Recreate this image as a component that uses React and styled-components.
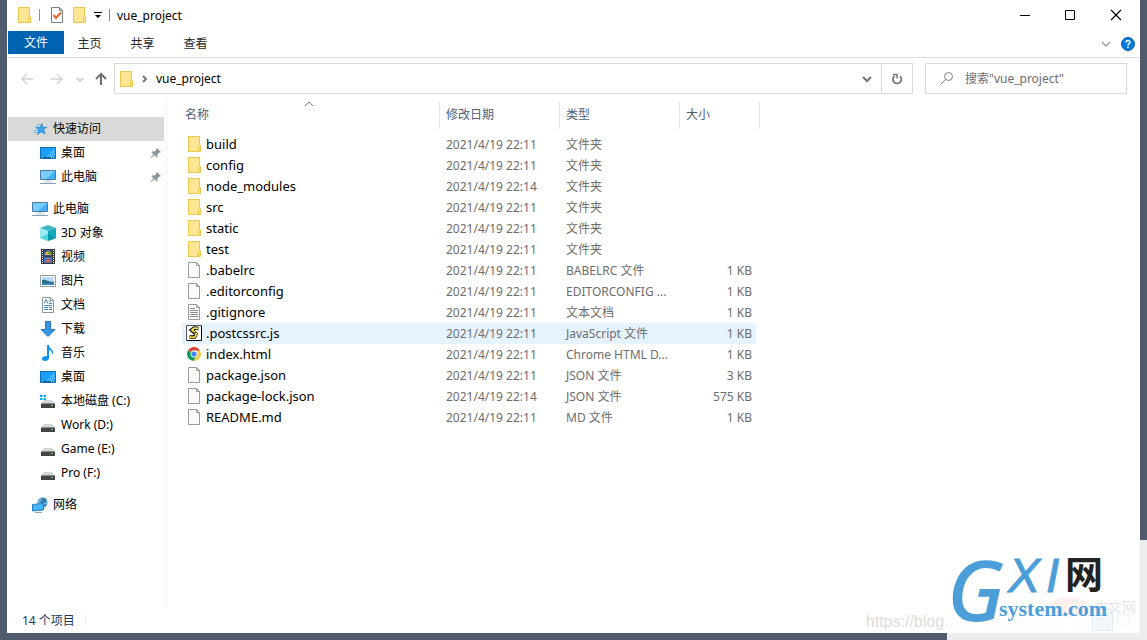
import styled, { createGlobalStyle } from 'styled-components';

const GlobalStyle = createGlobalStyle`
  * {
    box-sizing: border-box;
  }

  body {
    margin: 0;
    background-color: #505c6b;
    font-family: 'Noto Sans', 'Noto Sans CJK SC', sans-serif;
    font-size: 12px;
    line-height: 20px;
    color: #000;
  }

  button,
  input {
    font: inherit;
    color: inherit;
  }

  svg {
    flex: none;
  }
`;

// Window frame
const Desktop = styled.div`
  position: relative;
  display: flex;
  min-height: 100vh;
  padding: 0 7px 7px;
`;

const Window = styled.div`
  flex: 1;
  min-width: 0;
  display: flex;
  flex-direction: column;
  padding-left: 1px;
  background-color: #fff;
`;

const TitleBar = styled.header`
  display: flex;
  align-items: center;
  height: 31px;
  padding: 0 1px 1px 8px;
`;

const IconButton = styled.button`
  display: flex;
  align-items: center;
  justify-content: center;
  width: ${(props) => props.$width || 16}px;
  height: ${(props) => props.$height || 20}px;
  padding: 0;
  border: none;
  background: none;
`;

const Separator = styled.span`
  width: 1px;
  height: 12px;
  margin: 0 ${(props) => props.$gap}px;
  background-color: #8c8c8c;
`;

const Title = styled.h1`
  flex: 1;
  margin: 0;
  padding: 2px 0 0 3px;
  font-size: 12px;
  font-weight: 400;
`;

// Ribbon tabs
const Ribbon = styled.nav`
  display: flex;
  align-items: center;
  height: 27px;
  padding-right: 1px;
  border-bottom: 1px solid #dadbdc;
`;

const Tab = styled.button`
  width: ${(props) => (props.$active ? 56 : 53)}px;
  height: 23px;
  margin-bottom: 3px;
  padding: ${(props) => (props.$active ? 0 : '2px 2px 0 0')};
  border: none;
  background-color: ${(props) => (props.$active ? '#0063b1' : 'transparent')};
  color: ${(props) => (props.$active ? '#fff' : '#262626')};
`;

const Spacer = styled.span`
  flex: 1;
`;

// Address bar
const AddressRow = styled.div`
  display: flex;
  align-items: center;
  gap: 12px;
  padding: 5px 13px 5px 9px;
`;

const NavButtons = styled.div`
  display: flex;
  align-items: center;
  gap: 10px;
  margin-right: -7px;
`;

const AddressBox = styled.div`
  flex: 1;
  display: flex;
  align-items: center;
  height: 31px;
  padding-left: 3px;
  border: 1px solid #d9d9d9;
`;

const Crumb = styled.a`
  color: #000;
  text-decoration: none;
`;

const RefreshCell = styled.div`
  display: flex;
  height: 29px;
  border-left: 1px solid #d9d9d9;
`;

const SearchBox = styled.label`
  display: flex;
  align-items: center;
  gap: 10px;
  width: 202px;
  height: 31px;
  padding-left: 13px;
  border: 1px solid #d9d9d9;
`;

const SearchInput = styled.input`
  width: 100%;
  padding: 0;
  border: none;
  outline: none;
  background: none;

  &::placeholder {
    color: #6d6d6d;
    opacity: 1;
  }
`;

// Sidebar
const Main = styled.div`
  flex: 1;
  display: flex;
`;

const Sidebar = styled.nav`
  flex: none;
  width: 159px;
  margin-top: 2px;
  padding-top: 16px;
  border-right: 1px solid #f3f3f3;
`;

const SideGroup = styled.div`
  margin-bottom: 8px;
`;

const SideItem = styled.a`
  display: flex;
  align-items: center;
  gap: 5px;
  height: 24px;
  margin-right: 2px;
  padding-right: 2px;
  padding-left: ${(props) => (props.$level ? 32 : 24)}px;
  background-color: ${(props) => (props.$active ? '#d9d9d9' : 'transparent')};
  color: #000;
  text-decoration: none;
`;

const SideLabel = styled.span`
  flex: 1;
`;

// File list
const Content = styled.main`
  flex: 1;
  min-width: 0;
  padding: 3px 0 0 15px;
`;

const FileTable = styled.table`
  width: 578px;
  table-layout: fixed;
  border-collapse: collapse;
`;

const HeadRow = styled.tr`
  height: 32px;
`;

const HeadCell = styled.th`
  position: relative;
  width: ${(props) => props.$width}px;
  padding: 0 6px;
  font-weight: 400;
  text-align: left;
  vertical-align: top;
  line-height: 26px;
  color: #4c607a;
  background: linear-gradient(#e5e5e5, #e5e5e5) right top / 1px 27px no-repeat;

  &:first-child {
    padding-left: 3px;
  }
`;

const SortMark = styled.span`
  position: absolute;
  top: -6px;
  left: 0;
  right: 4px;
  display: flex;
  justify-content: center;
`;

const FileRow = styled.tr`
  height: 21px;
  background: ${(props) =>
    props.$active
      ? 'linear-gradient(#e5f3ff, #e5f3ff) left top / calc(100% - 4px) 100% no-repeat'
      : 'none'};
`;

const Cell = styled.td`
  overflow: hidden;
  padding: 0 6px;
  line-height: 21px;
  white-space: nowrap;
  text-overflow: ellipsis;
  text-align: ${(props) => (props.$right ? 'right' : 'left')};
  color: #6d6d6d;

  &:first-child {
    padding-left: 4px;
  }

  &:last-child {
    padding-right: 8px;
  }
`;

const FileName = styled.span`
  display: flex;
  gap: 4px;
  font-size: 13px;
  color: #000;

  svg {
    margin-top: 2px;
  }
`;

// Status bar
const StatusBar = styled.footer`
  display: flex;
  align-items: center;
  height: 26px;
  padding: 2px 0 0 14px;
  color: #1e395b;
`;

const StatusText = styled.span`
  padding-right: 10px;
  border-right: 1px solid #f0f0f0;
  line-height: 12px;
`;

// Watermark over the bottom right corner
const BlogMark = styled.span`
  position: absolute;
  right: 9px;
  bottom: 6px;
  font-family: 'Liberation Sans', sans-serif;
  font-size: 16px;
  line-height: 24px;
  color: #dcdcdc;
`;

const Brand = styled.div`
  position: absolute;
  right: 0;
  bottom: 0;
  display: flex;
  background-color: rgba(255, 255, 255, 0.89);
`;

function Icon({ children }) {
  return (
    <svg width="16" height="16" viewBox="0 0 16 16" fill="none" aria-hidden="true">
      {children}
    </svg>
  );
}

function FolderIcon() {
  return (
    <Icon>
      <rect x="2.5" y="0.5" width="11" height="15" fill="#ffe694" stroke="#ebc750" />
      <path d="M12.5 15.5v-5l1-1h1v6z" fill="#ffe694" stroke="#ebc750" />
    </Icon>
  );
}

function PageIcon({ lines }) {
  return (
    <Icon>
      <path d="M2.5.5h8l3 3v12h-11z" fill="#fafafa" stroke="#9a9a9a" />
      <path d="M10.5.5v3h3" stroke="#9a9a9a" />
      {lines && <path d="M4 4.5h5M4 6.5h8M4 8.5h8M4 10.5h8M4 12.5h8" stroke="#8f8f8f" />}
    </Icon>
  );
}

function ScriptIcon() {
  return (
    <Icon>
      <path d="M.5.5h15v15H.5z" fill="#fff" stroke="#555" />
      <path d="M15.5 1v14.5H1" stroke="#000" />
      <path d="M12.5 3.5 8 3 5.5 5l4.5 4-1.5 3h-5" stroke="#111" strokeWidth="3.6" />
      <path d="M12 3.5 8 3.2 6 5l4.5 4-2 3H4" stroke="#f0e040" strokeWidth="1.8" />
      <path d="m8 5 3-.5M7 8l3-.5m-5 4 4-1" stroke="#111" strokeWidth=".7" />
    </Icon>
  );
}

function ChromeIcon() {
  return (
    <Icon>
      <path d="M8 8 2 4.5A7 7 0 0 1 14.1 4.7H8z" fill="#db4437" />
      <path d="M2 4.5A7 7 0 0 0 7.5 15L11 9.5 8 8z" fill="#0f9d58" />
      <path d="M14.1 4.7A7 7 0 0 1 7.5 15L11 9.5V4.7z" fill="#ffcd40" />
      <circle cx="8" cy="8" r="3.4" fill="#fff" />
      <circle cx="8" cy="8" r="2.6" fill="#4285f4" />
    </Icon>
  );
}

function StarIcon() {
  return (
    <Icon>
      <path
        d="m9.8 2.500 1 3.600 4 .2-3.300 2.200 1.500 4.500-3.700-2.300-4 2.800 1.500-4.500-2.600-2.500 3.900-.2z"
        fill="#35a4ec"
        stroke="#1683d0"
        strokeWidth=".7"
      />
      <path d="M5 3.5h3M3 5.5h2M2 9.5h3M1.5 11.5h3" stroke="#5cb9f3" />
    </Icon>
  );
}

function DesktopIcon() {
  return (
    <Icon>
      <path d="M.5 2.5h15v11H.5z" fill="#1a9fff" stroke="#0873b8" />
      <path d="M15 3v7l-4 2.5H5z" fill="#42b3ff" />
      <path d="M1 12.5h14" stroke="#075e9c" />
      <path d="M2 12.5h1M11 12.5h1m1 0h1" stroke="#fff" />
    </Icon>
  );
}

function ComputerIcon() {
  return (
    <Icon>
      <path d="M.5 1.5h15v9H.5z" fill="#7accff" stroke="#497c9f" />
      <path d="M15 2v8H6z" fill="#45b2f8" />
      <path d="M6 11.5h4M4 13h8" stroke="#c3d0da" />
      <path d="M0 14.5h16" stroke="#8a9fb2" />
    </Icon>
  );
}

function CubeIcon() {
  return (
    <Icon>
      <path d="m8 0 8 3-8 3-8-3z" fill="#3fb8c6" />
      <path d="m0 3 8 3v10l-8-3z" fill="#9aebf1" />
      <path d="m16 3-8 3v10l8-3z" fill="#12a9bd" />
      <path d="m0 13 8-4v7z" fill="#4fd3e0" />
      <path d="m16 13-8-4v7z" fill="#0896ac" />
    </Icon>
  );
}

function VideoIcon() {
  return (
    <Icon>
      <path d="M1 0h14v15H1z" fill="#3a3a3a" />
      <path d="M4 1h8v6H4z" fill="#36568c" />
      <path d="M4 8h8v6H4z" fill="#4779cd" />
      <path d="M5 4c2-2 4-2 6-1v3H5z" fill="#e6b22d" />
      <path d="M8 3h3v2H8z" fill="#5ca33c" />
      <path d="m5 13 3-4 3 4z" fill="#df6038" />
      <path d="M2.5 1v14M13.5 1v14" stroke="#eee" strokeDasharray="1 1" />
    </Icon>
  );
}

function PictureIcon() {
  return (
    <Icon>
      <path d="M.5 2.5h15v11H.5z" fill="#fff" stroke="#989da1" />
      <path d="M2 4h12v8H2z" fill="#b7dcfa" />
      <path d="M2 7c4-1 6 2 12 2v3H2z" fill="#2d7187" />
      <path d="M2 10.5h12V12H2z" fill="#3a8ed0" />
    </Icon>
  );
}

function DocumentIcon() {
  return (
    <Icon>
      <path d="M2.5.5h8l3 3v12h-11z" fill="#fff" stroke="#8d969d" />
      <path d="M10.5.5v3h3" stroke="#8d969d" />
      <path d="m4 6.5 2-4 2 4m1-2h2m-2 2h3m-8 2h8m-8 2h4m1 0h3m-8 2h4" stroke="#378ac5" />
      <path d="M9 12.5h3" stroke="#4a6a50" />
    </Icon>
  );
}

function DownloadIcon() {
  return (
    <Icon>
      <path d="M5.5.5h5v8H15l-7 7-7-7h4.5z" fill="#3796e5" stroke="#2374c0" />
    </Icon>
  );
}

function MusicIcon() {
  return (
    <Icon>
      <path d="M7 0h2c0 4 5 4 4 9h-1c0-3-1-3-3-4v8c0 2-2 3-4 3s-3-1-3-2.5S4 11 7 11z" fill="#0c96ed" />
    </Icon>
  );
}

function DriveIcon({ system }) {
  return (
    <Icon>
      {system && <path d="M0 2h2.5v2H0zm3.5 0H6v2H3.5zM0 5h2.5v2H0zm3.5 0H6v2H3.5z" fill="#00adef" />}
      <path d="M4 7h8l3 4H1z" fill="#d4d6d8" />
      <path d="M1 10.5h14V15H1z" fill="#444" />
      <path d="M11 12.5h2" stroke="#67e06b" />
    </Icon>
  );
}

function NetworkIcon() {
  return (
    <Icon>
      <circle cx="10.5" cy="5.5" r="5.2" fill="#6bb2df" />
      <path d="M8 1c2 0 3 2 1 3s0 3 3 2 3-4 1-5M11 8l4-1-2 3z" fill="#3c7baa" />
      <path d="m.5 7.5 11-1V13l-11 1z" fill="#45b4fa" stroke="#2383c4" />
      <path d="M3 15.5h7" stroke="#98a9b8" />
    </Icon>
  );
}

function PinIcon() {
  return (
    <svg width="12" height="12" viewBox="0 0 12 12" aria-hidden="true">
      <path
        d="m7 1 4 4-1 .8-.8-.2-1.7 1.9.1 2-1 1-2.2-2.3L1 11.2l-.5-.4 3-3.3-2-2.2 1-1 2 .1 1.8-1.7-.2-.8z"
        fill="#8d979e"
      />
    </svg>
  );
}

function Chevron({ dir = 'down', color = '#767676', width = 2 }) {
  const paths = { down: 'm4 6 4 4 4-4', right: 'm6 5 3 3-3 3', up: 'm4 10 4-4 4 4', small: 'm5 7 3 3 3-3' };
  return (
    <Icon>
      <path d={paths[dir]} stroke={color} strokeWidth={width} />
    </Icon>
  );
}

function Arrow({ dir, color }) {
  const paths = {
    left: 'M14 8H3m5-5L3 8l5 5',
    right: 'M2 8h11M8 3l5 5-5 5',
    up: 'M8 14V3M3 8l5-5 5 5',
  };
  return (
    <Icon>
      <path d={paths[dir]} stroke={color} strokeWidth={dir === 'up' ? 2 : 1.5} />
    </Icon>
  );
}

const sideGroups = [
  [
    { label: '快速访问', icon: <StarIcon />, active: true },
    { label: '桌面', icon: <DesktopIcon />, level: 1, pinned: true },
    { label: '此电脑', icon: <ComputerIcon />, level: 1, pinned: true },
  ],
  [
    { label: '此电脑', icon: <ComputerIcon /> },
    { label: '3D 对象', icon: <CubeIcon />, level: 1 },
    { label: '视频', icon: <VideoIcon />, level: 1 },
    { label: '图片', icon: <PictureIcon />, level: 1 },
    { label: '文档', icon: <DocumentIcon />, level: 1 },
    { label: '下载', icon: <DownloadIcon />, level: 1 },
    { label: '音乐', icon: <MusicIcon />, level: 1 },
    { label: '桌面', icon: <DesktopIcon />, level: 1 },
    { label: '本地磁盘 (C:)', icon: <DriveIcon system />, level: 1 },
    { label: 'Work (D:)', icon: <DriveIcon />, level: 1 },
    { label: 'Game (E:)', icon: <DriveIcon />, level: 1 },
    { label: 'Pro (F:)', icon: <DriveIcon />, level: 1 },
  ],
  [{ label: '网络', icon: <NetworkIcon /> }],
];

const files = [
  { name: 'build', date: '2021/4/19 22:11', type: '文件夹', icon: <FolderIcon /> },
  { name: 'config', date: '2021/4/19 22:11', type: '文件夹', icon: <FolderIcon /> },
  { name: 'node_modules', date: '2021/4/19 22:14', type: '文件夹', icon: <FolderIcon /> },
  { name: 'src', date: '2021/4/19 22:11', type: '文件夹', icon: <FolderIcon /> },
  { name: 'static', date: '2021/4/19 22:11', type: '文件夹', icon: <FolderIcon /> },
  { name: 'test', date: '2021/4/19 22:11', type: '文件夹', icon: <FolderIcon /> },
  { name: '.babelrc', date: '2021/4/19 22:11', type: 'BABELRC 文件', size: '1 KB', icon: <PageIcon /> },
  { name: '.editorconfig', date: '2021/4/19 22:11', type: 'EDITORCONFIG ...', size: '1 KB', icon: <PageIcon /> },
  { name: '.gitignore', date: '2021/4/19 22:11', type: '文本文档', size: '1 KB', icon: <PageIcon lines /> },
  { name: '.postcssrc.js', date: '2021/4/19 22:11', type: 'JavaScript 文件', size: '1 KB', icon: <ScriptIcon />, active: true },
  { name: 'index.html', date: '2021/4/19 22:11', type: 'Chrome HTML D...', size: '1 KB', icon: <ChromeIcon /> },
  { name: 'package.json', date: '2021/4/19 22:11', type: 'JSON 文件', size: '3 KB', icon: <PageIcon /> },
  { name: 'package-lock.json', date: '2021/4/19 22:14', type: 'JSON 文件', size: '575 KB', icon: <PageIcon /> },
  { name: 'README.md', date: '2021/4/19 22:11', type: 'MD 文件', size: '1 KB', icon: <PageIcon /> },
];

function WindowHeader() {
  return (
    <TitleBar>
      <FolderIcon />
      <Separator $gap={7} />
      <IconButton $width={20} aria-label="属性">
        <svg width="14" height="16" viewBox="0 0 14 16" fill="none" aria-hidden="true">
          <path d="M1.5.5h8l3 3v12h-11z" fill="#fff" stroke="#7f7f7f" />
          <path d="M9.5.5v3h3" stroke="#7f7f7f" />
          <path d="m3.5 8 2.5 3 5-5.5" stroke="#e8622c" strokeWidth="2" />
        </svg>
      </IconButton>
      <IconButton $width={24} aria-label="新建文件夹">
        <FolderIcon />
      </IconButton>
      <IconButton $width={14} aria-label="自定义快速访问工具栏">
        <svg width="8" height="7" viewBox="0 0 8 7" aria-hidden="true">
          <path d="M0 0h8v1H0zM1 3h6L4 6z" fill="#000" />
        </svg>
      </IconButton>
      <Separator $gap={4} />
      <Title>vue_project</Title>
      <IconButton $width={46} aria-label="最小化">
        <Icon>
          <path d="M4 8.5h10" stroke="#000" />
        </Icon>
      </IconButton>
      <IconButton $width={46} aria-label="最大化">
        <Icon>
          <path d="M3.5 3.5h9v9h-9z" stroke="#000" />
        </Icon>
      </IconButton>
      <IconButton $width={46} aria-label="关闭">
        <Icon>
          <path d="m3 3 10 10M13 3 3 13" stroke="#000" strokeWidth="1.2" />
        </Icon>
      </IconButton>
    </TitleBar>
  );
}

function AddressBar() {
  return (
    <AddressRow>
      <NavButtons>
        <IconButton $width={20} aria-label="后退">
          <Arrow dir="left" color="#d3d3d3" />
        </IconButton>
        <IconButton $width={20} aria-label="前进">
          <Arrow dir="right" color="#d3d3d3" />
        </IconButton>
        <IconButton $width={6} aria-label="最近位置">
          <Chevron dir="small" color="#d3d3d3" />
        </IconButton>
        <IconButton aria-label="上移">
          <Arrow dir="up" color="#6f6f6f" />
        </IconButton>
      </NavButtons>
      <AddressBox>
        <FolderIcon />
        <IconButton $width={22} aria-label="展开路径">
          <Chevron dir="right" />
        </IconButton>
        <Crumb href="#vue_project">vue_project</Crumb>
        <Spacer />
        <IconButton $width={28} aria-label="以前的位置">
          <Chevron />
        </IconButton>
        <RefreshCell>
          <IconButton $width={30} $height={29} aria-label="刷新">
            <Icon>
              <path d="M11 5.2a4.2 4.2 0 1 1-5.500-.2" stroke="#767676" strokeWidth="1.8" />
              <path d="M4 3.500h4v4" stroke="#767676" strokeWidth="1.5" />
            </Icon>
          </IconButton>
        </RefreshCell>
      </AddressBox>
      <SearchBox>
        <Icon>
          <circle cx="9.5" cy="5.5" r="4" stroke="#858585" />
          <path d="m6.5 8.5-5 5" stroke="#858585" />
        </Icon>
        <SearchInput type="text" aria-label="搜索" placeholder={'搜索"vue_project"'} />
      </SearchBox>
    </AddressRow>
  );
}

function FileList() {
  return (
    <FileTable>
      <thead>
        <HeadRow>
          <HeadCell $width={258}>
            名称
            <SortMark>
              <Chevron dir="up" width={1} />
            </SortMark>
          </HeadCell>
          <HeadCell $width={120}>修改日期</HeadCell>
          <HeadCell $width={120}>类型</HeadCell>
          <HeadCell $width={80}>大小</HeadCell>
        </HeadRow>
      </thead>
      <tbody>
        {files.map((file) => (
          <FileRow key={file.name} $active={file.active}>
            <Cell>
              <FileName>
                {file.icon}
                {file.name}
              </FileName>
            </Cell>
            <Cell>{file.date}</Cell>
            <Cell>{file.type}</Cell>
            <Cell $right>{file.size}</Cell>
          </FileRow>
        ))}
      </tbody>
    </FileTable>
  );
}

function BrandMark() {
  return (
    <Brand>
      <svg width="200" height="100" viewBox="0 0 200 100" fill="#4c9ed9">
        <ellipse cx="122" cy="67" rx="20" ry="10" fill="#fdf1f0" />
        <path d="M145.5 69.5h20v21h-20z" fill="#f3f9fc" stroke="#deedf5" />
        <path d="M149 74h13M149 79h13M149 85h13M170 75h12v9h-12z" fill="none" stroke="#e4eef4" strokeDasharray="2 1" />
        <text x="147" y="72" fontSize="14" fill="#e6e6e6">中文网</text>
        <text x="0" y="81" fontFamily="Noto Sans" fontStyle="italic" fontSize="84" fontWeight="500">G</text>
        <text x="61" y="52" fontFamily="Liberation Sans" fontStyle="italic" fontSize="48" stroke="#4c9ed9">X</text>
        <text x="99" y="52" fontFamily="Liberation Sans" fontStyle="italic" fontSize="48" stroke="#4c9ed9">I</text>
        <text x="118" y="48" fontFamily="Noto Sans CJK SC" fontSize="38" fontWeight="700" fill="#222">网</text>
        <text x="52" y="76" fontFamily="Liberation Serif" fontSize="22" fontWeight="700">system.com</text>
      </svg>
    </Brand>
  );
}

function App() {
  return (
    <>
      <GlobalStyle />
      <Desktop>
        <Window>
          <WindowHeader />
          <Ribbon>
            <Tab $active>文件</Tab>
            <Tab>主页</Tab>
            <Tab>共享</Tab>
            <Tab>查看</Tab>
            <Spacer />
            <IconButton $width={22} aria-label="展开功能区">
              <Chevron color="#a0a0a0" width={1.5} />
            </IconButton>
            <IconButton $width={22} aria-label="帮助">
              <svg width="14" height="14" viewBox="0 0 14 14" fill="none" aria-hidden="true">
                <circle cx="7" cy="7" r="6.5" fill="#0078d7" stroke="#0861ac" />
                <path d="M5 5.5C5 3 9 3 9 5.3 9 6.8 7 6.8 7 8.5M7 9.5V11" stroke="#fff" strokeWidth="1.5" />
              </svg>
            </IconButton>
          </Ribbon>
          <AddressBar />
          <Main>
            <Sidebar>
              {sideGroups.map((group, i) => (
                <SideGroup key={i}>
                  {group.map((item) => (
                    <SideItem key={item.label} href="#" $level={item.level} $active={item.active}>
                      {item.icon}
                      <SideLabel>{item.label}</SideLabel>
                      {item.pinned && <PinIcon />}
                    </SideItem>
                  ))}
                </SideGroup>
              ))}
            </Sidebar>
            <Content>
              <FileList />
            </Content>
          </Main>
          <StatusBar>
            <StatusText>14 个项目</StatusText>
          </StatusBar>
        </Window>
        <BlogMark>https://blog.csdn.net/weixin_45788915</BlogMark>
        <BrandMark />
      </Desktop>
    </>
  );
}

export default App;
